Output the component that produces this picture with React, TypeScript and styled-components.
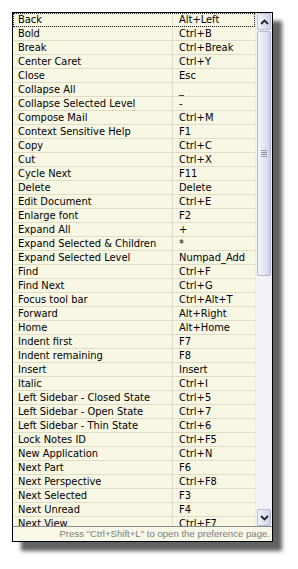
import styled, { createGlobalStyle } from "styled-components";

const GlobalStyle = createGlobalStyle`
  html, body {
    margin: 0;
    padding: 0;
    background: #ffffff;
  }
  body {
    font-family: "DejaVu Sans Condensed", "Liberation Sans", Arial, sans-serif;
  }
`;

const Page = styled.div`
  padding: 12px 0 0 12px;
  width: 298px;
  height: 569px;
  box-sizing: border-box;
`;

const Popup = styled.div`
  width: 259px;
  border: 1px solid #000000;
  background: #f8f7e4;
  box-shadow: 9px 9px 4px rgba(0, 0, 0, 0.62);
  display: flex;
  flex-direction: column;
`;

const Body = styled.div`
  display: flex;
  height: 513px;
`;

const Table = styled.div`
  flex: 1;
  overflow: hidden;
`;

const Row = styled.div<{ $focused?: boolean }>`
  display: grid;
  grid-template-columns: 160px 1fr;
  height: 14px;
  box-sizing: border-box;
  border-bottom: 1px solid #dedcc6;
  font-size: 11px;
  line-height: 13px;
  color: #000000;
  outline: ${(p) => (p.$focused ? "1px dotted #222" : "none")};
  outline-offset: -1px;
`;

const NameCell = styled.div`
  padding-left: 5px;
  border-right: 1px solid #dedcc6;
  white-space: nowrap;
  overflow: hidden;
`;

const KeyCell = styled.div`
  padding-left: 6px;
  white-space: nowrap;
  overflow: hidden;
`;

const Scrollbar = styled.div`
  width: 17px;
  display: flex;
  flex-direction: column;
  background: #f3f3f7;
  border-left: 1px solid #ecebe0;
  box-sizing: border-box;
`;

const ArrowButton = styled.div`
  height: 17px;
  margin: 0 1px;
  box-sizing: border-box;
  border: 1px solid #b7bdd6;
  border-radius: 2px;
  background: linear-gradient(to right, #f4f5fa, #cdd2e6);
  display: flex;
  align-items: center;
  justify-content: center;
`;

const Track = styled.div`
  flex: 1;
  padding: 1px 1px 0;
`;

const Thumb = styled.div`
  height: 245px;
  box-sizing: border-box;
  border: 1px solid #b3b8d0;
  border-radius: 2px;
  background: linear-gradient(to right, #f6f6fb, #dfe1ee 70%, #c9cde0);
  display: flex;
  flex-direction: column;
  align-items: center;
  justify-content: center;
  gap: 1px;
`;

const Grip = styled.div`
  width: 6px;
  height: 1px;
  background: #8e93ac;
`;

const Footer = styled.div`
  height: 15px;
  box-sizing: border-box;
  border-top: 1px solid #8c8c8c;
  background: #f8f7e8;
  color: #7e7e7e;
  font-family: "Liberation Sans", Arial, sans-serif;
  font-size: 9.6px;
  line-height: 14px;
  text-align: right;
  padding-right: 2px;
  white-space: nowrap;
  overflow: hidden;
`;

const shortcuts: [string, string][] = [
  ["Back", "Alt+Left"],
  ["Bold", "Ctrl+B"],
  ["Break", "Ctrl+Break"],
  ["Center Caret", "Ctrl+Y"],
  ["Close", "Esc"],
  ["Collapse All", "_"],
  ["Collapse Selected Level", "-"],
  ["Compose Mail", "Ctrl+M"],
  ["Context Sensitive Help", "F1"],
  ["Copy", "Ctrl+C"],
  ["Cut", "Ctrl+X"],
  ["Cycle Next", "F11"],
  ["Delete", "Delete"],
  ["Edit Document", "Ctrl+E"],
  ["Enlarge font", "F2"],
  ["Expand All", "+"],
  ["Expand Selected & Children", "*"],
  ["Expand Selected Level", "Numpad_Add"],
  ["Find", "Ctrl+F"],
  ["Find Next", "Ctrl+G"],
  ["Focus tool bar", "Ctrl+Alt+T"],
  ["Forward", "Alt+Right"],
  ["Home", "Alt+Home"],
  ["Indent first", "F7"],
  ["Indent remaining", "F8"],
  ["Insert", "Insert"],
  ["Italic", "Ctrl+I"],
  ["Left Sidebar - Closed State", "Ctrl+5"],
  ["Left Sidebar - Open State", "Ctrl+7"],
  ["Left Sidebar - Thin State", "Ctrl+6"],
  ["Lock Notes ID", "Ctrl+F5"],
  ["New Application", "Ctrl+N"],
  ["Next Part", "F6"],
  ["Next Perspective", "Ctrl+F8"],
  ["Next Selected", "F3"],
  ["Next Unread", "F4"],
  ["Next View", "Ctrl+F7"],
];

function Chevron({ up }: { up?: boolean }) {
  return (
    <svg width="9" height="6" viewBox="0 0 9 6">
      <path
        d={up ? "M1 5 L4.5 1.5 L8 5" : "M1 1 L4.5 4.5 L8 1"}
        fill="none"
        stroke="#202430"
        strokeWidth="1.8"
      />
    </svg>
  );
}

function App() {
  return (
    <Page>
      <GlobalStyle />
      <Popup>
        <Body>
          <Table>
            {shortcuts.map(([name, key], i) => (
              <Row key={name} $focused={i === 0}>
                <NameCell>{name}</NameCell>
                <KeyCell>{key}</KeyCell>
              </Row>
            ))}
          </Table>
          <Scrollbar>
            <ArrowButton>
              <Chevron up />
            </ArrowButton>
            <Track>
              <Thumb>
                <Grip />
                <Grip />
                <Grip />
                <Grip />
              </Thumb>
            </Track>
            <ArrowButton>
              <Chevron />
            </ArrowButton>
          </Scrollbar>
        </Body>
        <Footer>Press "Ctrl+Shift+L" to open the preference page.</Footer>
      </Popup>
    </Page>
  );
}

export default App;
